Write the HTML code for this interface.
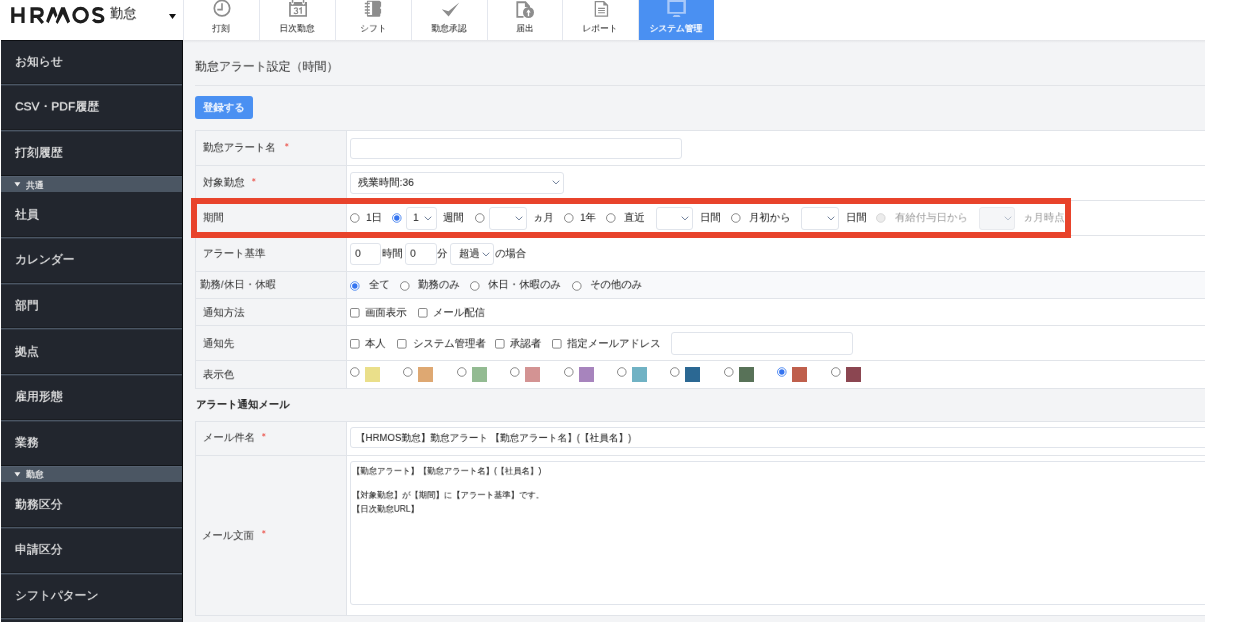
<!DOCTYPE html><html><head><meta charset="utf-8"><style>
*{box-sizing:border-box;margin:0;padding:0}
html,body{width:1236px;height:622px;overflow:hidden;background:#fff;font-family:"Liberation Sans",sans-serif;color:#333}
.a{position:absolute}
.t{position:absolute;white-space:nowrap;line-height:1;transform-origin:0 0;will-change:transform}
</style></head><body><div class="a" style="left:0px;top:0px;width:1236px;height:40px;background:#fff"></div>
<svg class="a" style="left:0;top:0" width="183" height="40" viewBox="0 0 183 40">
<g fill="none" stroke="#1e1e1e" stroke-width="3.2" stroke-linecap="butt" stroke-linejoin="miter">
<path d="M12.8 7.2V23M23 7.2V23M12.8 15.1H23"/>
<path d="M32.1 23V8.8H37.5C40.6 8.8 42.2 10.3 42.2 12.6C42.2 14.9 40.6 16.4 37.5 16.4H32.1M37.2 16.3L42.8 23"/>
<circle cx="80.6" cy="15.1" r="6.7"/>
<path d="M102.6 10.2C101.6 9 100 8.7 98.3 8.7C95.6 8.7 93.8 10 93.8 12C93.8 16.2 102.8 13.9 102.8 18.5C102.8 20.6 100.8 21.6 98.2 21.6C96 21.6 94.3 20.8 93.2 19.5"/>
</g>
<path d="M46.1 21.3L51.1 7.3H54.7L57.4 15.2L55.4 18.1L53.1 12.9L48.6 23.2Z M55.7 22L61.2 7.3H64.8L70.1 21.5L67.5 23.6L62.9 13.9L57.6 23.9Z" fill="#1e1e1e"/>
<path d="M169 14H176L172.5 18.9Z" fill="#111"/>
</svg>
<div class="t" style="left:110.00px;top:7.40px;font-size:16px;transform:scale(0.82500);color:#222;font-weight:normal;-webkit-text-stroke:0.048px #222;">勤怠</div>
<div class="a" style="left:183px;top:0px;width:1px;height:40px;background:#e4e7ee"></div>
<div class="a" style="left:259px;top:0px;width:1px;height:40px;background:#e4e7ee"></div>
<div class="t" style="left:-578.60px;top:23.90px;width:2000px;text-align:center;font-size:11px;transform:scale(0.80000);color:#333;font-weight:normal;-webkit-text-stroke:0.075px #333;">打刻</div>
<div class="a" style="left:335px;top:0px;width:1px;height:40px;background:#e4e7ee"></div>
<div class="t" style="left:-502.80px;top:23.90px;width:2000px;text-align:center;font-size:11px;transform:scale(0.80000);color:#333;font-weight:normal;-webkit-text-stroke:0.075px #333;">日次勤怠</div>
<div class="a" style="left:411px;top:0px;width:1px;height:40px;background:#e4e7ee"></div>
<div class="t" style="left:-427.00px;top:23.90px;width:2000px;text-align:center;font-size:11px;transform:scale(0.80000);color:#333;font-weight:normal;-webkit-text-stroke:0.075px #333;">シフト</div>
<div class="a" style="left:487px;top:0px;width:1px;height:40px;background:#e4e7ee"></div>
<div class="t" style="left:-351.20px;top:23.90px;width:2000px;text-align:center;font-size:11px;transform:scale(0.80000);color:#333;font-weight:normal;-webkit-text-stroke:0.075px #333;">勤怠承認</div>
<div class="a" style="left:562px;top:0px;width:1px;height:40px;background:#e4e7ee"></div>
<div class="t" style="left:-275.40px;top:23.90px;width:2000px;text-align:center;font-size:11px;transform:scale(0.80000);color:#333;font-weight:normal;-webkit-text-stroke:0.075px #333;">届出</div>
<div class="a" style="left:638px;top:0px;width:1px;height:40px;background:#e4e7ee"></div>
<div class="t" style="left:-199.60px;top:23.90px;width:2000px;text-align:center;font-size:11px;transform:scale(0.80000);color:#333;font-weight:normal;-webkit-text-stroke:0.075px #333;">レポート</div>
<div class="a" style="left:639px;top:0px;width:75px;height:40px;background:#4a90f2"></div>
<div class="t" style="left:-123.80px;top:23.90px;width:2000px;text-align:center;font-size:11px;transform:scale(0.80000);color:#fff;font-weight:normal;-webkit-text-stroke:0.375px #fff;">システム管理</div>
<svg class="a" style="left:184px;top:0" width="530" height="20" viewBox="184 0 530 20">
<circle cx="222" cy="8.2" r="7.7" fill="none" stroke="#8d8d8d" stroke-width="1.7"/>
<path d="M222 3.3V9.6H217.3" fill="none" stroke="#8d8d8d" stroke-width="1.6"/>
<path d="M289.1 1.9H291.2V3.6A1.4 1.4 0 0 0 293.9 3.6V1.9H302.2V3.6A1.4 1.4 0 0 0 304.9 3.6V1.9H307V16.7H289.1Z" fill="#8d8d8d"/>
<rect x="290.8" y="5.9" width="14.6" height="9.2" fill="#fff"/>
<rect x="291.8" y="0" width="1.5" height="2.8" fill="#8d8d8d"/>
<rect x="302.8" y="0" width="1.5" height="2.8" fill="#8d8d8d"/>
<path d="M294.2 9.1Q294.7 7.9 296 7.9Q297.5 7.9 297.5 9.3Q297.5 10.6 295.7 10.75Q297.7 10.8 297.7 12.2Q297.7 13.7 295.9 13.7Q294.5 13.7 293.9 12.6" fill="none" stroke="#8d8d8d" stroke-width="1.25"/><path d="M299.1 9.3L301.2 7.9V13.8" fill="none" stroke="#8d8d8d" stroke-width="1.35"/>
<path d="M367.5 0.8H379.3Q380.2 0.8 380.3 1.8H381.1V6.8H380.3V9H381.1V13.5H380.3V15.7Q380.2 16.7 379.3 16.7H367.9Q366.9 16.7 366.9 15.7V1.8Q366.9 0.8 367.5 0.8Z" fill="#8d8d8d"/>
<rect x="367.9" y="1.8" width="4.2" height="13.2" fill="#fff"/>
<g stroke="#8d8d8d" stroke-width="1.5"><path d="M364.8 3.5H369.8M364.8 6.75H369.8M364.8 10H369.8M364.8 13.1H369.8"/></g>
<path d="M441.8 9.2L448.5 11.3L459.3 2.5L448.6 16.6Z" fill="#8d8d8d"/>
<path d="M516.4 1.3H525.8L530 6.1V8H528V6.9H524.9V3.2H518.2V15.9H523.5V17.7H516.4Z" fill="#8d8d8d"/>
<circle cx="528.5" cy="12.5" r="5.5" fill="#8d8d8d"/>
<path d="M528.5 10.2V16.2" stroke="#fff" stroke-width="1.4" fill="none"/>
<path d="M526.3 12.4L528.5 9.6L530.7 12.4Z" fill="#fff"/>
<path d="M595.35 1.6H603.8L607.5 5.2V16.1H595.35Z" fill="none" stroke="#8d8d8d" stroke-width="1.3"/>
<path d="M603.3 1.2V5.4H607.9Z" fill="#8d8d8d"/>
<path d="M598.1 8.4H604.9M598.1 10.45H604.9M598.1 12.7H604.9" stroke="#8d8d8d" stroke-width="1.1"/>
<path d="M667.3 0H685.9V13.8H667.3ZM669.6 1.9V11.9H683.4V1.9Z" fill="#a9c9f9" fill-rule="evenodd"/>
<path d="M674 15.1H679.2L680.6 16.9H672.6Z" fill="#a9c9f9"/>
</svg>
<div class="a" style="left:0px;top:40px;width:1px;height:582px;background:#fff"></div>
<div class="a" style="left:1px;top:40px;width:182px;height:582px;background:#22262e"></div>
<div class="a" style="left:1px;top:40px;width:182px;height:1px;background:#0c0e12"></div>
<div class="a" style="left:182px;top:40px;width:1px;height:582px;background:#08090b"></div>
<div class="a" style="left:1px;top:83px;width:181px;height:1px;background:#1a1d22"></div>
<div class="a" style="left:1px;top:84px;width:181px;height:1px;background:#4a5563"></div>
<div class="a" style="left:1px;top:85px;width:181px;height:1px;background:#323944"></div>
<div class="a" style="left:1px;top:129px;width:181px;height:1px;background:#1a1d22"></div>
<div class="a" style="left:1px;top:130px;width:181px;height:1px;background:#4a5563"></div>
<div class="a" style="left:1px;top:131px;width:181px;height:1px;background:#323944"></div>
<div class="a" style="left:1px;top:236px;width:181px;height:1px;background:#1a1d22"></div>
<div class="a" style="left:1px;top:237px;width:181px;height:1px;background:#4a5563"></div>
<div class="a" style="left:1px;top:238px;width:181px;height:1px;background:#323944"></div>
<div class="a" style="left:1px;top:282px;width:181px;height:1px;background:#1a1d22"></div>
<div class="a" style="left:1px;top:283px;width:181px;height:1px;background:#4a5563"></div>
<div class="a" style="left:1px;top:284px;width:181px;height:1px;background:#323944"></div>
<div class="a" style="left:1px;top:327px;width:181px;height:1px;background:#1a1d22"></div>
<div class="a" style="left:1px;top:328px;width:181px;height:1px;background:#4a5563"></div>
<div class="a" style="left:1px;top:329px;width:181px;height:1px;background:#323944"></div>
<div class="a" style="left:1px;top:373px;width:181px;height:1px;background:#1a1d22"></div>
<div class="a" style="left:1px;top:374px;width:181px;height:1px;background:#4a5563"></div>
<div class="a" style="left:1px;top:375px;width:181px;height:1px;background:#323944"></div>
<div class="a" style="left:1px;top:419px;width:181px;height:1px;background:#1a1d22"></div>
<div class="a" style="left:1px;top:420px;width:181px;height:1px;background:#4a5563"></div>
<div class="a" style="left:1px;top:421px;width:181px;height:1px;background:#323944"></div>
<div class="a" style="left:1px;top:526px;width:181px;height:1px;background:#1a1d22"></div>
<div class="a" style="left:1px;top:527px;width:181px;height:1px;background:#4a5563"></div>
<div class="a" style="left:1px;top:528px;width:181px;height:1px;background:#323944"></div>
<div class="a" style="left:1px;top:572px;width:181px;height:1px;background:#1a1d22"></div>
<div class="a" style="left:1px;top:573px;width:181px;height:1px;background:#4a5563"></div>
<div class="a" style="left:1px;top:574px;width:181px;height:1px;background:#323944"></div>
<div class="a" style="left:1px;top:617px;width:181px;height:1px;background:#1a1d22"></div>
<div class="a" style="left:1px;top:618px;width:181px;height:1px;background:#4a5563"></div>
<div class="a" style="left:1px;top:619px;width:181px;height:1px;background:#323944"></div>
<div class="a" style="left:1px;top:175.2px;width:181px;height:1px;background:#111418"></div>
<div class="a" style="left:1px;top:176.2px;width:181px;height:16px;background:#4b5663"></div>
<div class="a" style="left:1px;top:176.2px;width:181px;height:1px;background:#566170"></div>
<svg class="a" style="left:14px;top:182.2px" width="8" height="6"><path d="M0.4 0.3H6.4L3.4 4.4Z" fill="#ececec"/></svg>
<div class="t" style="left:26.00px;top:181.10px;font-size:11px;transform:scale(0.80000);color:#ececec;font-weight:normal;-webkit-text-stroke:0.312px #ececec;">共通</div>
<div class="a" style="left:1px;top:464.5px;width:181px;height:1px;background:#111418"></div>
<div class="a" style="left:1px;top:465.5px;width:181px;height:16px;background:#4b5663"></div>
<div class="a" style="left:1px;top:465.5px;width:181px;height:1px;background:#566170"></div>
<svg class="a" style="left:14px;top:471.5px" width="8" height="6"><path d="M0.4 0.3H6.4L3.4 4.4Z" fill="#ececec"/></svg>
<div class="t" style="left:26.00px;top:470.40px;font-size:11px;transform:scale(0.80000);color:#ececec;font-weight:normal;-webkit-text-stroke:0.312px #ececec;">勤怠</div>
<div class="t" style="left:14.80px;top:54.75px;font-size:15px;transform:scale(0.79333);color:#ececec;font-weight:normal;-webkit-text-stroke:0.277px #ececec;">お知らせ</div>
<div class="t" style="left:14.80px;top:100.45px;font-size:15px;transform:scale(0.79333);color:#ececec;font-weight:normal;-webkit-text-stroke:0.277px #ececec;">CSV・PDF履歴</div>
<div class="t" style="left:14.80px;top:146.15px;font-size:15px;transform:scale(0.79333);color:#ececec;font-weight:normal;-webkit-text-stroke:0.277px #ececec;">打刻履歴</div>
<div class="t" style="left:14.80px;top:207.75px;font-size:15px;transform:scale(0.79333);color:#ececec;font-weight:normal;-webkit-text-stroke:0.277px #ececec;">社員</div>
<div class="t" style="left:14.80px;top:252.95px;font-size:15px;transform:scale(0.79333);color:#ececec;font-weight:normal;-webkit-text-stroke:0.277px #ececec;">カレンダー</div>
<div class="t" style="left:14.80px;top:298.85px;font-size:15px;transform:scale(0.79333);color:#ececec;font-weight:normal;-webkit-text-stroke:0.277px #ececec;">部門</div>
<div class="t" style="left:14.80px;top:344.55px;font-size:15px;transform:scale(0.79333);color:#ececec;font-weight:normal;-webkit-text-stroke:0.277px #ececec;">拠点</div>
<div class="t" style="left:14.80px;top:390.05px;font-size:15px;transform:scale(0.79333);color:#ececec;font-weight:normal;-webkit-text-stroke:0.277px #ececec;">雇用形態</div>
<div class="t" style="left:14.80px;top:435.85px;font-size:15px;transform:scale(0.79333);color:#ececec;font-weight:normal;-webkit-text-stroke:0.277px #ececec;">業務</div>
<div class="t" style="left:14.80px;top:497.85px;font-size:15px;transform:scale(0.79333);color:#ececec;font-weight:normal;-webkit-text-stroke:0.277px #ececec;">勤務区分</div>
<div class="t" style="left:14.80px;top:543.05px;font-size:15px;transform:scale(0.79333);color:#ececec;font-weight:normal;-webkit-text-stroke:0.277px #ececec;">申請区分</div>
<div class="t" style="left:14.80px;top:588.85px;font-size:15px;transform:scale(0.79333);color:#ececec;font-weight:normal;-webkit-text-stroke:0.277px #ececec;">シフトパターン</div>
<div class="a" style="left:183px;top:40px;width:1022px;height:582px;background:#f3f4f6"></div>
<div class="a" style="left:183px;top:40px;width:1022px;height:3px;background:linear-gradient(#e3e4e7,#f3f4f6)"></div>
<div class="a" style="left:1205px;top:40px;width:31px;height:582px;background:#fff"></div>
<div class="t" style="left:195.10px;top:59.52px;font-size:15px;transform:scale(0.79667);color:#333;font-weight:normal;-webkit-text-stroke:0.050px #333;">勤怠アラート設定（時間）</div>
<div class="a" style="left:195px;top:85px;width:1010px;height:1px;background:#e2e4e8"></div>
<div class="a" style="left:195px;top:96px;width:58px;height:23px;background:#4a90f2;border-radius:3px"></div>
<div class="t" style="left:203.00px;top:101.50px;font-size:13px;transform:scale(0.80000);color:#fff;font-weight:normal;-webkit-text-stroke:0.375px #fff;">登録する</div>
<div class="a" style="left:183px;top:0;width:1022px;height:622px;overflow:hidden">
<div class="a" style="left:12px;top:130px;width:1200px;height:259px;background:#fff"></div>
<div class="a" style="left:12px;top:130px;width:151px;height:35px;background:#f3f4f6"></div>
<div class="a" style="left:12px;top:165px;width:151px;height:35px;background:#f3f4f6"></div>
<div class="a" style="left:12px;top:200px;width:151px;height:35px;background:#f3f4f6"></div>
<div class="a" style="left:12px;top:235px;width:151px;height:36px;background:#f3f4f6"></div>
<div class="a" style="left:12px;top:271px;width:151px;height:27px;background:#f3f4f6"></div>
<div class="a" style="left:163px;top:271px;width:1000px;height:27px;background:#f8f9fb"></div>
<div class="a" style="left:12px;top:298px;width:151px;height:27px;background:#f3f4f6"></div>
<div class="a" style="left:12px;top:325px;width:151px;height:35px;background:#f3f4f6"></div>
<div class="a" style="left:12px;top:360px;width:151px;height:28px;background:#f3f4f6"></div>
<div class="a" style="left:12px;top:130px;width:1200px;height:1px;background:#e1e4e9"></div>
<div class="a" style="left:12px;top:165px;width:1200px;height:1px;background:#e1e4e9"></div>
<div class="a" style="left:12px;top:200px;width:1200px;height:1px;background:#e1e4e9"></div>
<div class="a" style="left:12px;top:235px;width:1200px;height:1px;background:#e1e4e9"></div>
<div class="a" style="left:12px;top:271px;width:1200px;height:1px;background:#e1e4e9"></div>
<div class="a" style="left:12px;top:298px;width:1200px;height:1px;background:#e1e4e9"></div>
<div class="a" style="left:12px;top:325px;width:1200px;height:1px;background:#e1e4e9"></div>
<div class="a" style="left:12px;top:360px;width:1200px;height:1px;background:#e1e4e9"></div>
<div class="a" style="left:12px;top:388px;width:1200px;height:1px;background:#e1e4e9"></div>
<div class="a" style="left:12px;top:130px;width:1px;height:259px;background:#e1e4e9"></div>
<div class="a" style="left:163px;top:130px;width:1px;height:259px;background:#e1e4e9"></div>
<div class="t" style="left:20.30px;top:142.20px;font-size:13px;transform:scale(0.80000);color:#333;font-weight:normal;-webkit-text-stroke:0.050px #333;">勤怠アラート名</div>
<svg class="a" style="left:101.60000000000002px;top:143.20000000000002px" width="5" height="5" viewBox="0 0 5 5"><path d="M1.8 0.2V3.6M0.2 1.05L3.4 2.75M3.4 1.05L0.2 2.75" stroke="#ec6560" stroke-width="0.85"/></svg>
<div class="t" style="left:20.30px;top:177.40px;font-size:13px;transform:scale(0.80000);color:#333;font-weight:normal;-webkit-text-stroke:0.050px #333;">対象勤怠</div>
<svg class="a" style="left:69.4px;top:178.4px" width="5" height="5" viewBox="0 0 5 5"><path d="M1.8 0.2V3.6M0.2 1.05L3.4 2.75M3.4 1.05L0.2 2.75" stroke="#ec6560" stroke-width="0.85"/></svg>
<div class="t" style="left:20.00px;top:211.80px;font-size:13px;transform:scale(0.80000);color:#333;font-weight:normal;-webkit-text-stroke:0.050px #333;">期間</div>
<div class="t" style="left:20.30px;top:247.80px;font-size:13px;transform:scale(0.80000);color:#333;font-weight:normal;-webkit-text-stroke:0.050px #333;">アラート基準</div>
<div class="t" style="left:16.60px;top:279.30px;font-size:13px;transform:scale(0.80000);color:#333;font-weight:normal;-webkit-text-stroke:0.050px #333;">勤務/休日・休暇</div>
<div class="t" style="left:20.30px;top:306.60px;font-size:13px;transform:scale(0.80000);color:#333;font-weight:normal;-webkit-text-stroke:0.050px #333;">通知方法</div>
<div class="t" style="left:20.30px;top:337.80px;font-size:13px;transform:scale(0.80000);color:#333;font-weight:normal;-webkit-text-stroke:0.050px #333;">通知先</div>
<div class="t" style="left:20.30px;top:369.20px;font-size:13px;transform:scale(0.80000);color:#333;font-weight:normal;-webkit-text-stroke:0.050px #333;">表示色</div>
<div class="a" style="left:167px;top:137.5px;width:332px;height:21.5px;background:#fff;border:1px solid #e0e4eb;border-radius:3px"></div>
<div class="a" style="left:167px;top:172px;width:214px;height:21.5px;background:#fff;border:1px solid #e0e4eb;border-radius:3px"></div>
<div class="t" style="left:175.20px;top:176.90px;font-size:13px;transform:scale(0.80000);color:#262626;font-weight:normal;-webkit-text-stroke:0.050px #262626;">残業時間:36</div>
<svg class="a" style="left:368.5px;top:180.3px" width="9" height="6"><path d="M0.7 0.7L4 3.9L7.3 0.7" fill="none" stroke="#71819b" stroke-width="1"/></svg>
<svg class="a" style="left:167.3px;top:212.6px" width="10" height="10"><circle cx="4.8" cy="5" r="4.3" fill="#fff" stroke="#6e6e6e" stroke-width="0.8"/></svg>
<div class="t" style="left:183.00px;top:212.40px;font-size:13px;transform:scale(0.80000);color:#262626;font-weight:normal;-webkit-text-stroke:0.050px #262626;">1日</div>
<svg class="a" style="left:209px;top:212.6px" width="10" height="10"><circle cx="4.8" cy="5" r="4.3" fill="#fff" stroke="#4a86f0" stroke-width="0.9"/><circle cx="4.8" cy="5" r="2.7" fill="#3574f0"/></svg>
<div class="a" style="left:223px;top:206.5px;width:31px;height:23px;background:#fff;border:1px solid #e0e4eb;border-radius:3px"></div>
<div class="t" style="left:229.50px;top:212.40px;font-size:13px;transform:scale(0.80000);color:#262626;font-weight:normal;-webkit-text-stroke:0.050px #262626;">1</div>
<svg class="a" style="left:241.39999999999998px;top:215.6px" width="9" height="6"><path d="M0.7 0.7L4 3.9L7.3 0.7" fill="none" stroke="#71819b" stroke-width="1"/></svg>
<div class="t" style="left:260.00px;top:212.40px;font-size:13px;transform:scale(0.80000);color:#262626;font-weight:normal;-webkit-text-stroke:0.050px #262626;">週間</div>
<svg class="a" style="left:291.6px;top:212.6px" width="10" height="10"><circle cx="4.8" cy="5" r="4.3" fill="#fff" stroke="#6e6e6e" stroke-width="0.8"/></svg>
<div class="a" style="left:305.5px;top:206.5px;width:38px;height:23px;background:#fff;border:1px solid #e0e4eb;border-radius:3px"></div>
<svg class="a" style="left:331.70000000000005px;top:215.6px" width="9" height="6"><path d="M0.7 0.7L4 3.9L7.3 0.7" fill="none" stroke="#71819b" stroke-width="1"/></svg>
<div class="t" style="left:350.00px;top:212.40px;font-size:13px;transform:scale(0.80000);color:#262626;font-weight:normal;-webkit-text-stroke:0.050px #262626;">ヵ月</div>
<svg class="a" style="left:381px;top:212.6px" width="10" height="10"><circle cx="4.8" cy="5" r="4.3" fill="#fff" stroke="#6e6e6e" stroke-width="0.8"/></svg>
<div class="t" style="left:397.00px;top:212.40px;font-size:13px;transform:scale(0.80000);color:#262626;font-weight:normal;-webkit-text-stroke:0.050px #262626;">1年</div>
<svg class="a" style="left:423.20000000000005px;top:212.6px" width="10" height="10"><circle cx="4.8" cy="5" r="4.3" fill="#fff" stroke="#6e6e6e" stroke-width="0.8"/></svg>
<div class="t" style="left:441.20px;top:212.40px;font-size:13px;transform:scale(0.80000);color:#262626;font-weight:normal;-webkit-text-stroke:0.050px #262626;">直近</div>
<div class="a" style="left:472.5px;top:206.5px;width:37px;height:23px;background:#fff;border:1px solid #e0e4eb;border-radius:3px"></div>
<svg class="a" style="left:498.29999999999995px;top:215.6px" width="9" height="6"><path d="M0.7 0.7L4 3.9L7.3 0.7" fill="none" stroke="#71819b" stroke-width="1"/></svg>
<div class="t" style="left:516.80px;top:212.40px;font-size:13px;transform:scale(0.80000);color:#262626;font-weight:normal;-webkit-text-stroke:0.050px #262626;">日間</div>
<svg class="a" style="left:547.8px;top:212.6px" width="10" height="10"><circle cx="4.8" cy="5" r="4.3" fill="#fff" stroke="#6e6e6e" stroke-width="0.8"/></svg>
<div class="t" style="left:566.30px;top:212.40px;font-size:13px;transform:scale(0.80000);color:#262626;font-weight:normal;-webkit-text-stroke:0.050px #262626;">月初から</div>
<div class="a" style="left:618.3px;top:206.5px;width:37.5px;height:23px;background:#fff;border:1px solid #e0e4eb;border-radius:3px"></div>
<svg class="a" style="left:643.6px;top:215.6px" width="9" height="6"><path d="M0.7 0.7L4 3.9L7.3 0.7" fill="none" stroke="#71819b" stroke-width="1"/></svg>
<div class="t" style="left:662.50px;top:212.40px;font-size:13px;transform:scale(0.80000);color:#262626;font-weight:normal;-webkit-text-stroke:0.050px #262626;">日間</div>
<svg class="a" style="left:693px;top:212.6px" width="10" height="10"><circle cx="4.8" cy="5" r="4.3" fill="#ececec" stroke="#d0d0d0" stroke-width="0.8"/></svg>
<div class="t" style="left:711.70px;top:212.40px;font-size:13px;transform:scale(0.80000);color:#9c9c9c;font-weight:normal;-webkit-text-stroke:0.050px #9c9c9c;">有給付与日から</div>
<div class="a" style="left:795.7px;top:206.5px;width:36.8px;height:23px;background:#f5f6f8;border:1px solid #e8eaee;border-radius:3px"></div>
<svg class="a" style="left:820.8px;top:215.6px" width="9" height="6"><path d="M0.7 0.7L4 3.9L7.3 0.7" fill="none" stroke="#b4bdcb" stroke-width="1"/></svg>
<div class="t" style="left:840.30px;top:212.40px;font-size:13px;transform:scale(0.80000);color:#9c9c9c;font-weight:normal;-webkit-text-stroke:0.050px #9c9c9c;">ヵ月時点</div>
<div class="a" style="left:8px;top:198px;width:880px;height:40px;border:6px solid #e8432b"></div>
<div class="a" style="left:167.2px;top:243.2px;width:30.7px;height:21.5px;background:#fff;border:1px solid #e0e4eb;border-radius:3px"></div>
<div class="t" style="left:171.70px;top:248.40px;font-size:13px;transform:scale(0.80000);color:#262626;font-weight:normal;-webkit-text-stroke:0.050px #262626;">0</div>
<div class="t" style="left:198.90px;top:248.40px;font-size:13px;transform:scale(0.80000);color:#262626;font-weight:normal;-webkit-text-stroke:0.050px #262626;">時間</div>
<div class="a" style="left:222.2px;top:243.2px;width:31.5px;height:21.5px;background:#fff;border:1px solid #e0e4eb;border-radius:3px"></div>
<div class="t" style="left:226.70px;top:248.40px;font-size:13px;transform:scale(0.80000);color:#262626;font-weight:normal;-webkit-text-stroke:0.050px #262626;">0</div>
<div class="t" style="left:254.20px;top:248.40px;font-size:13px;transform:scale(0.80000);color:#262626;font-weight:normal;-webkit-text-stroke:0.050px #262626;">分</div>
<div class="a" style="left:267.4px;top:242.5px;width:44px;height:22.5px;background:#fff;border:1px solid #e0e4eb;border-radius:3px"></div>
<div class="t" style="left:275.50px;top:248.40px;font-size:13px;transform:scale(0.80000);color:#262626;font-weight:normal;-webkit-text-stroke:0.050px #262626;">超過</div>
<svg class="a" style="left:299.2px;top:251.6px" width="9" height="6"><path d="M0.7 0.7L4 3.9L7.3 0.7" fill="none" stroke="#71819b" stroke-width="1"/></svg>
<div class="t" style="left:311.90px;top:248.40px;font-size:13px;transform:scale(0.80000);color:#262626;font-weight:normal;-webkit-text-stroke:0.050px #262626;">の場合</div>
<svg class="a" style="left:167.2px;top:280.5px" width="10" height="10"><circle cx="4.8" cy="5" r="4.3" fill="#fff" stroke="#4a86f0" stroke-width="0.9"/><circle cx="4.8" cy="5" r="2.7" fill="#3574f0"/></svg>
<div class="t" style="left:185.70px;top:279.20px;font-size:13px;transform:scale(0.80000);color:#262626;font-weight:normal;-webkit-text-stroke:0.050px #262626;">全て</div>
<svg class="a" style="left:217px;top:280.5px" width="10" height="10"><circle cx="4.8" cy="5" r="4.3" fill="#fff" stroke="#6e6e6e" stroke-width="0.8"/></svg>
<div class="t" style="left:234.80px;top:279.20px;font-size:13px;transform:scale(0.80000);color:#262626;font-weight:normal;-webkit-text-stroke:0.050px #262626;">勤務のみ</div>
<svg class="a" style="left:287.2px;top:280.5px" width="10" height="10"><circle cx="4.8" cy="5" r="4.3" fill="#fff" stroke="#6e6e6e" stroke-width="0.8"/></svg>
<div class="t" style="left:305.30px;top:279.20px;font-size:13px;transform:scale(0.80000);color:#262626;font-weight:normal;-webkit-text-stroke:0.050px #262626;">休日・休暇のみ</div>
<svg class="a" style="left:389.20000000000005px;top:280.5px" width="10" height="10"><circle cx="4.8" cy="5" r="4.3" fill="#fff" stroke="#6e6e6e" stroke-width="0.8"/></svg>
<div class="t" style="left:407.20px;top:279.20px;font-size:13px;transform:scale(0.80000);color:#262626;font-weight:normal;-webkit-text-stroke:0.050px #262626;">その他のみ</div>
<svg class="a" style="left:167.2px;top:308.2px" width="10" height="10"><rect x="0.5" y="0.5" width="8.6" height="8.6" rx="1.3" fill="#fff" stroke="#6b6b6b" stroke-width="0.8"/></svg>
<div class="t" style="left:182.40px;top:307.00px;font-size:13px;transform:scale(0.80000);color:#262626;font-weight:normal;-webkit-text-stroke:0.050px #262626;">画面表示</div>
<svg class="a" style="left:235.2px;top:308.2px" width="10" height="10"><rect x="0.5" y="0.5" width="8.6" height="8.6" rx="1.3" fill="#fff" stroke="#6b6b6b" stroke-width="0.8"/></svg>
<div class="t" style="left:250.30px;top:307.00px;font-size:13px;transform:scale(0.80000);color:#262626;font-weight:normal;-webkit-text-stroke:0.050px #262626;">メール配信</div>
<svg class="a" style="left:167.2px;top:339px" width="10" height="10"><rect x="0.5" y="0.5" width="8.6" height="8.6" rx="1.3" fill="#fff" stroke="#6b6b6b" stroke-width="0.8"/></svg>
<div class="t" style="left:182.40px;top:337.80px;font-size:13px;transform:scale(0.80000);color:#262626;font-weight:normal;-webkit-text-stroke:0.050px #262626;">本人</div>
<svg class="a" style="left:214px;top:339px" width="10" height="10"><rect x="0.5" y="0.5" width="8.6" height="8.6" rx="1.3" fill="#fff" stroke="#6b6b6b" stroke-width="0.8"/></svg>
<div class="t" style="left:229.60px;top:337.80px;font-size:13px;transform:scale(0.80000);color:#262626;font-weight:normal;-webkit-text-stroke:0.050px #262626;">システム管理者</div>
<svg class="a" style="left:312px;top:339px" width="10" height="10"><rect x="0.5" y="0.5" width="8.6" height="8.6" rx="1.3" fill="#fff" stroke="#6b6b6b" stroke-width="0.8"/></svg>
<div class="t" style="left:327.00px;top:337.80px;font-size:13px;transform:scale(0.80000);color:#262626;font-weight:normal;-webkit-text-stroke:0.050px #262626;">承認者</div>
<svg class="a" style="left:368.79999999999995px;top:339px" width="10" height="10"><rect x="0.5" y="0.5" width="8.6" height="8.6" rx="1.3" fill="#fff" stroke="#6b6b6b" stroke-width="0.8"/></svg>
<div class="t" style="left:384.00px;top:337.80px;font-size:13px;transform:scale(0.80000);color:#262626;font-weight:normal;-webkit-text-stroke:0.050px #262626;">指定メールアドレス</div>
<div class="a" style="left:488px;top:332px;width:181.5px;height:22.5px;background:#fff;border:1px solid #e0e4eb;border-radius:3px"></div>
<svg class="a" style="left:167.0px;top:366.8px" width="10" height="10"><circle cx="4.8" cy="5" r="4.3" fill="#fff" stroke="#6e6e6e" stroke-width="0.8"/></svg>
<div class="a" style="left:182.0px;top:367.3px;width:15px;height:15px;background:#eadf8a"></div>
<svg class="a" style="left:220.39999999999998px;top:366.8px" width="10" height="10"><circle cx="4.8" cy="5" r="4.3" fill="#fff" stroke="#6e6e6e" stroke-width="0.8"/></svg>
<div class="a" style="left:235.39999999999998px;top:367.3px;width:15px;height:15px;background:#dea872"></div>
<svg class="a" style="left:273.8px;top:366.8px" width="10" height="10"><circle cx="4.8" cy="5" r="4.3" fill="#fff" stroke="#6e6e6e" stroke-width="0.8"/></svg>
<div class="a" style="left:288.8px;top:367.3px;width:15px;height:15px;background:#93bb92"></div>
<svg class="a" style="left:327.2px;top:366.8px" width="10" height="10"><circle cx="4.8" cy="5" r="4.3" fill="#fff" stroke="#6e6e6e" stroke-width="0.8"/></svg>
<div class="a" style="left:342.20000000000005px;top:367.3px;width:15px;height:15px;background:#d39393"></div>
<svg class="a" style="left:380.6px;top:366.8px" width="10" height="10"><circle cx="4.8" cy="5" r="4.3" fill="#fff" stroke="#6e6e6e" stroke-width="0.8"/></svg>
<div class="a" style="left:395.6px;top:367.3px;width:15px;height:15px;background:#a784bd"></div>
<svg class="a" style="left:434.0px;top:366.8px" width="10" height="10"><circle cx="4.8" cy="5" r="4.3" fill="#fff" stroke="#6e6e6e" stroke-width="0.8"/></svg>
<div class="a" style="left:449.0px;top:367.3px;width:15px;height:15px;background:#70b2c4"></div>
<svg class="a" style="left:487.4px;top:366.8px" width="10" height="10"><circle cx="4.8" cy="5" r="4.3" fill="#fff" stroke="#6e6e6e" stroke-width="0.8"/></svg>
<div class="a" style="left:502.4px;top:367.3px;width:15px;height:15px;background:#2b6893"></div>
<svg class="a" style="left:540.8px;top:366.8px" width="10" height="10"><circle cx="4.8" cy="5" r="4.3" fill="#fff" stroke="#6e6e6e" stroke-width="0.8"/></svg>
<div class="a" style="left:555.8px;top:367.3px;width:15px;height:15px;background:#587258"></div>
<svg class="a" style="left:594.2px;top:366.8px" width="10" height="10"><circle cx="4.8" cy="5" r="4.3" fill="#fff" stroke="#4a86f0" stroke-width="0.9"/><circle cx="4.8" cy="5" r="2.7" fill="#3574f0"/></svg>
<div class="a" style="left:609.2px;top:367.3px;width:15px;height:15px;background:#bf5f4c"></div>
<svg class="a" style="left:647.5999999999999px;top:366.8px" width="10" height="10"><circle cx="4.8" cy="5" r="4.3" fill="#fff" stroke="#6e6e6e" stroke-width="0.8"/></svg>
<div class="a" style="left:662.5999999999999px;top:367.3px;width:15px;height:15px;background:#8b4651"></div>
<div class="t" style="left:12.50px;top:399.20px;font-size:13px;transform:scale(0.80000);color:#222;font-weight:bold;">アラート通知メール</div>
<div class="a" style="left:12px;top:421px;width:1200px;height:195px;background:#fff"></div>
<div class="a" style="left:12px;top:421px;width:151px;height:33.5px;background:#f3f4f6"></div>
<div class="a" style="left:12px;top:454.5px;width:151px;height:160.5px;background:#f3f4f6"></div>
<div class="a" style="left:12px;top:421px;width:1200px;height:1px;background:#e1e4e9"></div>
<div class="a" style="left:12px;top:454.5px;width:1200px;height:1px;background:#e1e4e9"></div>
<div class="a" style="left:12px;top:615px;width:1200px;height:1px;background:#e1e4e9"></div>
<div class="a" style="left:12px;top:421px;width:1px;height:195px;background:#e1e4e9"></div>
<div class="a" style="left:163px;top:421px;width:1px;height:195px;background:#e1e4e9"></div>
<div class="t" style="left:19.60px;top:432.30px;font-size:13px;transform:scale(0.80000);color:#333;font-weight:normal;-webkit-text-stroke:0.050px #333;">メール件名</div>
<svg class="a" style="left:79.39999999999998px;top:433.2px" width="5" height="5" viewBox="0 0 5 5"><path d="M1.8 0.2V3.6M0.2 1.05L3.4 2.75M3.4 1.05L0.2 2.75" stroke="#ec6560" stroke-width="0.85"/></svg>
<div class="t" style="left:19.00px;top:529.70px;font-size:13px;transform:scale(0.80000);color:#333;font-weight:normal;-webkit-text-stroke:0.050px #333;">メール文面</div>
<svg class="a" style="left:79px;top:530.2px" width="5" height="5" viewBox="0 0 5 5"><path d="M1.8 0.2V3.6M0.2 1.05L3.4 2.75M3.4 1.05L0.2 2.75" stroke="#ec6560" stroke-width="0.85"/></svg>
<div class="a" style="left:167.2px;top:427.3px;width:900px;height:21.2px;background:#fff;border:1px solid #e0e4eb;border-radius:3px"></div>
<div class="t" style="left:172.70px;top:432.90px;font-size:12px;transform:scale(0.80000);color:#262626;font-weight:normal;-webkit-text-stroke:0.050px #262626;">【HRMOS勤怠】勤怠アラート 【勤怠アラート名】(【社員名】)</div>
<div class="a" style="left:167.2px;top:461px;width:900px;height:143.5px;background:#fff;border:1px solid #e0e4eb;border-radius:3px"></div>
<div class="t" style="left:169.00px;top:466.93px;font-size:10px;transform:scale(0.83500);color:#262626;font-weight:normal;-webkit-text-stroke:0.072px #262626;">【勤怠アラート】【勤怠アラート名】(【社員名】)</div>
<div class="t" style="left:169.00px;top:491.43px;font-size:10px;transform:scale(0.83500);color:#262626;font-weight:normal;-webkit-text-stroke:0.072px #262626;">【対象勤怠】が【期間】に【アラート基準】です。</div>
<div class="t" style="left:169.00px;top:504.52px;font-size:10px;transform:scale(0.83500);color:#262626;font-weight:normal;-webkit-text-stroke:0.072px #262626;">【日次勤怠URL】</div>
</div></body></html>
